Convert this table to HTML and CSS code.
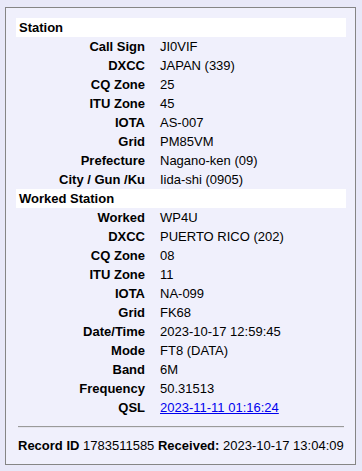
FILE: index.html
```html
<!DOCTYPE html>
<html>
<head>
<meta charset="utf-8">
<link rel="stylesheet" href="styles.css">
</head>
<body>
<div class="card">
  <div class="section-head">Station</div>
  <div class="rows">
    <div class="lbl">Call Sign</div><div class="val">JI0VIF</div>
    <div class="lbl">DXCC</div><div class="val">JAPAN (339)</div>
    <div class="lbl">CQ Zone</div><div class="val">25</div>
    <div class="lbl">ITU Zone</div><div class="val">45</div>
    <div class="lbl">IOTA</div><div class="val">AS-007</div>
    <div class="lbl">Grid</div><div class="val">PM85VM</div>
    <div class="lbl">Prefecture</div><div class="val">Nagano-ken (09)</div>
    <div class="lbl">City / Gun /Ku</div><div class="val">Iida-shi (0905)</div>
  </div>
  <div class="section-head">Worked Station</div>
  <div class="rows">
    <div class="lbl">Worked</div><div class="val">WP4U</div>
    <div class="lbl">DXCC</div><div class="val">PUERTO RICO (202)</div>
    <div class="lbl">CQ Zone</div><div class="val">08</div>
    <div class="lbl">ITU Zone</div><div class="val">11</div>
    <div class="lbl">IOTA</div><div class="val">NA-099</div>
    <div class="lbl">Grid</div><div class="val">FK68</div>
    <div class="lbl">Date/Time</div><div class="val">2023-10-17 12:59:45</div>
    <div class="lbl">Mode</div><div class="val">FT8 (DATA)</div>
    <div class="lbl">Band</div><div class="val">6M</div>
    <div class="lbl">Frequency</div><div class="val">50.31513</div>
    <div class="lbl">QSL</div><div class="val"><a href="#">2023-11-11 01:16:24</a></div>
  </div>
  <hr class="sep">
  <div class="footer"><b>Record ID</b> 1783511585 <b>Received:</b> 2023-10-17 13:04:09</div>
</div>
</body>
</html>
```
FILE: styles.css
```css
html, body {
  margin: 0;
  padding: 0;
  background: #e8e8f8;
}
body {
  padding: 7px 6px 0 5px;
  font-family: "Liberation Sans", Arial, sans-serif;
  font-size: 13px;
  color: #000;
}
.card {
  width: 351px;
  box-sizing: border-box;
  border: 1px solid #858585;
  background: #f0f0fc;
  padding: 10px 9px 9px 10px;
}
.section-head {
  background: #fff;
  font-weight: bold;
  line-height: 19px;
  height: 19px;
  padding-left: 3px;
}
.rows {
  display: grid;
  grid-template-columns: 129px 1fr;
  column-gap: 15px;
  line-height: 19px;
}
.lbl {
  font-weight: bold;
  text-align: right;
  white-space: nowrap;
}
.val {
  white-space: nowrap;
}
.val a {
  color: #0000ee;
  text-decoration: underline;
}
.sep {
  margin: 9px 2px 0 2px;
  border: 0;
  border-top: 1px solid #9a9a9a;
  border-bottom: 1px solid #e4e4ee;
  height: 0;
}
.footer {
  margin-top: 8px;
  line-height: 19px;
  padding-left: 2px;
  white-space: nowrap;
}
```
